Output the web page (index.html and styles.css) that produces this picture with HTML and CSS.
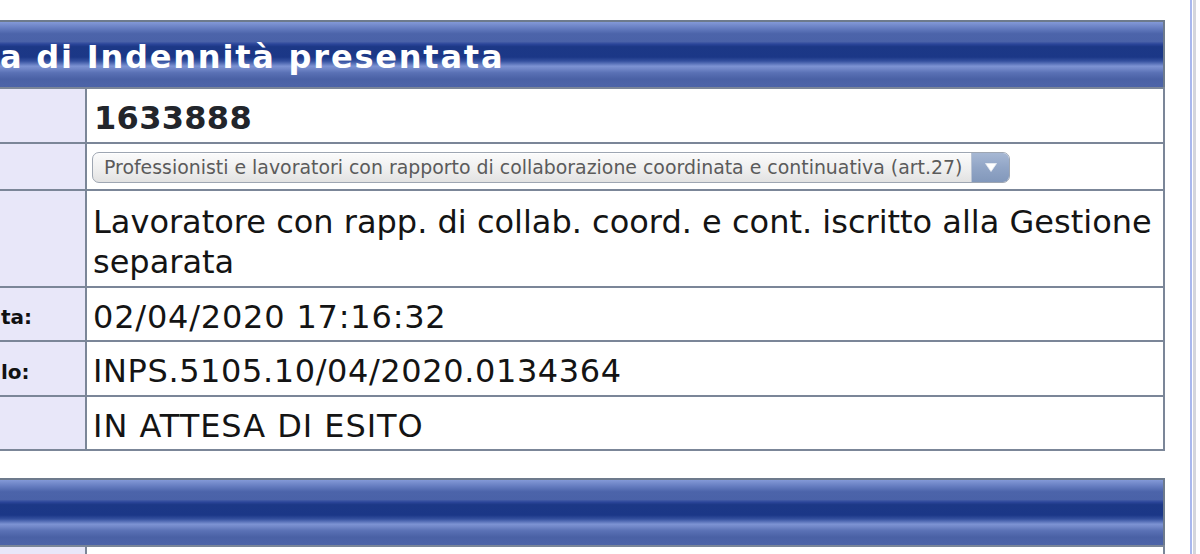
FILE: index.html
```html
<!DOCTYPE html>
<html lang="it">
<head>
<meta charset="utf-8">
<title>Domanda di Indennità presentata</title>
<link rel="stylesheet" href="styles.css">
</head>
<body>
<div class="page">
  <div class="main">
    <div class="panel-head"><span class="title">a di Indennità presentata</span></div>
    <div class="grid">
      <div class="row r1">
        <div class="label"></div>
        <div class="value strong">1633888</div>
      </div>
      <div class="row r2">
        <div class="label"></div>
        <div class="value">
          <div class="select">
            <span class="select-text">Professionisti e lavoratori con rapporto di collaborazione coordinata e continuativa (art.27)</span>
            <span class="select-arrow"><svg width="14" height="11" viewBox="0 0 14 11"><path d="M1.5 1.5 H12.5 L7 9.5 Z" fill="#ffffff" stroke="#e8ecf3" stroke-width="0.8" stroke-linejoin="round"/></svg></span>
          </div>
        </div>
      </div>
      <div class="row r3">
        <div class="label"></div>
        <div class="value multi">Lavoratore con rapp. di collab. coord. e cont. iscritto alla Gestione separata</div>
      </div>
      <div class="row r4">
        <div class="label"><span class="lbl">ta:</span></div>
        <div class="value">02/04/2020 17:16:32</div>
      </div>
      <div class="row r5">
        <div class="label"><span class="lbl">lo:</span></div>
        <div class="value">INPS.5105.10/04/2020.0134364</div>
      </div>
      <div class="row r6">
        <div class="label"></div>
        <div class="value">IN ATTESA DI ESITO</div>
      </div>
    </div>
    <div class="panel-head second"></div>
    <div class="grid">
      <div class="row r7">
        <div class="label"></div>
        <div class="value"></div>
      </div>
    </div>
  </div>
  <div class="edge"></div>
</div>
</body>
</html>
```
FILE: styles.css
```css
html, body {
  margin: 0;
  padding: 0;
  background: #ffffff;
}
body {
  font-family: "DejaVu Sans", Verdana, sans-serif;
  color: #141414;
}
.page {
  display: flex;
  height: 554px;
  overflow: hidden;
}
.main {
  width: 1165px;
  padding-top: 20px;
  flex: none;
}
.edge {
  flex: none;
  margin-left: 25px;
  width: 2px;
  background: #a9b8ee;
  border-right: 1px solid #ffffff;
  box-shadow: 3px 0 0 #d4d6dc;
}
.panel-head {
  height: 65px;
  border-top: 2px solid #6d7a8c;
  border-right: 2px solid #6d7a8c;
  background: linear-gradient(to bottom,
    #8399d7 0%,
    #647bbf 10%,
    #4c64aa 18%,
    #4a62a8 30%,
    #2b459a 34%,
    #1c3886 38%,
    #1b3787 54%,
    #34509e 60%,
    #7d93d3 68%,
    #7187c8 72%,
    #5a71b5 78%,
    #4a61a5 88%,
    #4d64a8 100%);
  display: flex;
  align-items: center;
  overflow: hidden;
}
.panel-head.second {
  margin-top: 27px;
}
.title {
  color: #ffffff;
  font-weight: bold;
  font-size: 32px;
  letter-spacing: 1.8px;
  white-space: nowrap;
  margin-top: 5px;
}
.grid {
  border-top: 2px solid #7b8698;
  border-right: 2px solid #7b8698;
}
.row {
  display: flex;
  border-bottom: 2px solid #7b8698;
}
.label {
  width: 85px;
  flex: none;
  background: #e8e7f9;
  border-right: 2px solid #7b8698;
  display: flex;
  align-items: center;
}
.lbl {
  font-weight: bold;
  font-size: 20px;
  color: #111111;
  padding-left: 1px;
  margin-top: 6px;
}
.value {
  flex: 1;
  min-width: 0;
  padding: 5px 6px 0;
  font-size: 32px;
  line-height: 40px;
  display: flex;
  align-items: center;
  white-space: nowrap;
}
.value.strong {
  font-weight: bold;
  color: #22252b;
  padding-left: 7px;
  padding-top: 4px;
  letter-spacing: 0.3px;
}
.value.multi {
  display: block;
  white-space: normal;
  padding-top: 11px;
}
.r1 { height: 53px; }
.r2 { height: 45px; }
.r2 .value { padding-top: 2px; }
.r3 { height: 95px; }
.r4 { height: 52px; }
.r4 .value { letter-spacing: 0.8px; }
.r5 { height: 53px; }
.r5 .value { letter-spacing: 0.6px; }
.r6 { height: 52px; }
.r6 .value { letter-spacing: 0.95px; }
.r7 { height: 40px; }

.select {
  margin-left: -1px;
  width: 916px;
  height: 29px;
  border: 1px solid #9ea6b2;
  border-radius: 7px;
  background: linear-gradient(to bottom, #fbfbfb 0%, #efefef 55%, #e2e2e2 100%);
  display: flex;
  align-items: stretch;
  overflow: hidden;
  box-shadow: inset 0 1px 0 #ffffff;
}
.select-text {
  flex: 1;
  font-size: 18.9px;
  line-height: 29px;
  color: #5b5b5b;
  padding-left: 11px;
  white-space: nowrap;
  overflow: hidden;
}
.select-arrow {
  width: 37px;
  flex: none;
  border-left: 1px solid #b9c3d3;
  background: linear-gradient(to bottom, #a7b8d4 0%, #91a5c6 50%, #8298bb 100%);
  display: flex;
  align-items: center;
  justify-content: center;
}
```
